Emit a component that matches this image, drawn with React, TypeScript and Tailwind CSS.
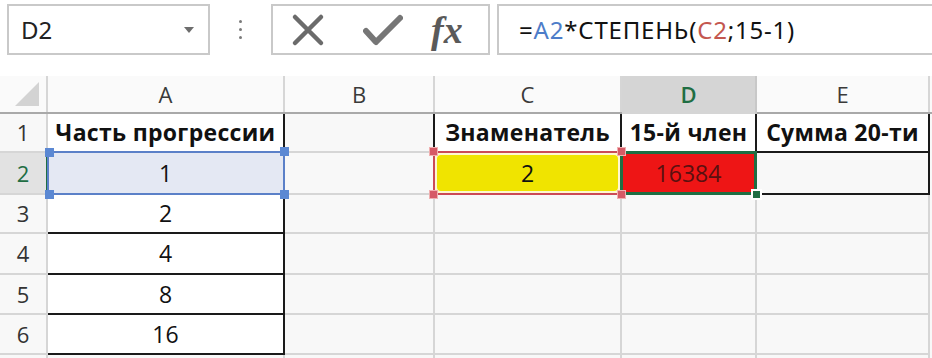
import React from "react";

const F = { fontFamily: '"Open Sans", "Noto Sans", sans-serif' };

type CellProps = {
  w: string;
  className?: string;
  children?: React.ReactNode;
};

function Cell({ w, className = "", children }: CellProps) {
  return (
    <div
      className={`relative box-border flex shrink-0 items-center justify-center border-b-2 border-r-2 ${w} ${className}`}
    >
      {children}
    </div>
  );
}

function Handle({ className }: { className: string }) {
  return <div className={`absolute z-20 h-[9px] w-[9px] ${className}`} />;
}

export default function App() {
  const G = "border-[#d6d6d6]";
  return (
    <div
      className="relative h-[358px] w-[932px] overflow-hidden bg-white text-[#111]"
      style={F}
    >
      {/* Toolbar */}
      <div className="flex h-[76px] items-start pt-[4px]">
        <div className="ml-[7px] flex h-[51px] w-[203px] items-center justify-between border-2 border-[#c9c9c9] bg-white pl-[12px] pr-[14px]">
          <span className="text-[24px] text-[#222]" style={{ fontFamily: '"Noto Sans", sans-serif' }}>
            D2
          </span>
          <svg width="10" height="6" viewBox="0 0 10 6">
            <path d="M0 0 L10 0 L5 6 Z" fill="#6d6d6d" />
          </svg>
        </div>
        <div className="flex h-[51px] w-[61px] flex-col items-center justify-center gap-[5px]">
          <div className="h-[3px] w-[3px] rounded-full bg-[#7a7a7a]" />
          <div className="h-[3px] w-[3px] rounded-full bg-[#7a7a7a]" />
          <div className="h-[3px] w-[3px] rounded-full bg-[#7a7a7a]" />
        </div>
        <div className="flex h-[51px] w-[219px] items-center border-2 border-[#c9c9c9] bg-white">
          <svg className="ml-[18px]" width="34" height="34" viewBox="0 0 34 34">
            <path d="M4 4 L30 30 M30 4 L4 30" stroke="#6b6b6b" strokeWidth="4.5" strokeLinecap="round" />
          </svg>
          <svg className="ml-[38px]" width="40" height="32" viewBox="0 0 40 32">
            <path d="M3 17 L13 28 L37 4" stroke="#767676" strokeWidth="6" strokeLinecap="round" strokeLinejoin="round" fill="none" />
          </svg>
          <span
            className="ml-[28px] text-[38px] font-semibold italic leading-none text-[#5a5a5a]"
            style={{ fontFamily: '"Liberation Serif", "DejaVu Serif", serif' }}
          >
            fx
          </span>
        </div>
        <div className="ml-[7px] flex h-[51px] flex-1 items-center border-y-2 border-l-2 border-[#c9c9c9] bg-white pl-[20px]">
          <span
            className="text-[24px] tracking-[0.8px] text-[#111]"
            style={{ fontFamily: '"Noto Sans", sans-serif' }}
          >
            =<span className="text-[#4d7dc9]">A2</span>*СТЕПЕНЬ(
            <span className="text-[#c4574f]">C2</span>;15-1)
          </span>
        </div>
      </div>

      {/* Column headers */}
      <div className="flex h-[38px] border-b-2 border-[#a9a9a9] bg-[#fafafa] text-[22px] text-[#3a3a3a]">
        <div className={`relative box-border h-full w-[48px] shrink-0 border-r-2 ${G}`}>
          <svg className="absolute bottom-[6px] right-[7px]" width="24" height="24" viewBox="0 0 24 24">
            <path d="M24 0 L24 24 L0 24 Z" fill="#d3d3d3" />
          </svg>
        </div>
        <div className={`box-border flex h-full w-[237px] shrink-0 items-center justify-center border-r-2 ${G}`}>A</div>
        <div className={`box-border flex h-full w-[150px] shrink-0 items-center justify-center border-r-2 ${G}`}>B</div>
        <div className={`box-border flex h-full w-[187px] shrink-0 items-center justify-center border-r-2 ${G}`}>C</div>
        <div className="mb-[-2px] box-border flex h-[40px] w-[135px] shrink-0 items-center justify-center border-b-2 border-r-2 border-[#1f6e43] border-r-[#c8c8c8] bg-[#d5d5d5] pb-[2px] font-semibold text-[#1f6e43]">
          D
        </div>
        <div className={`box-border flex h-full w-[173px] shrink-0 items-center justify-center border-r-2 ${G}`}>E</div>
        <div className="flex-1" />
      </div>

      {/* Body */}
      <div className="text-[23px]">
        {/* Row 1 */}
        <div className="flex h-[39px] bg-[#f8f8f8]">
          <Cell w="w-[48px]" className={`${G} text-[22px] text-[#333]`}>1</Cell>
          <Cell w="w-[237px]" className="border-b-[#1a1a1a] border-r-[#1a1a1a] bg-white font-bold tracking-[0.3px]">
            Часть прогрессии
          </Cell>
          <Cell w="w-[150px]" className={`${G} border-r-[#1a1a1a]`} />
          <Cell w="w-[187px]" className="border-r-[#1a1a1a] border-b-[#d6d6d6] bg-white font-bold tracking-[0.3px]">
            Знаменатель
          </Cell>
          <Cell w="w-[135px]" className="border-r-[#1a1a1a] border-b-[#d6d6d6] bg-white font-bold tracking-[0.3px]">
            15-й член
          </Cell>
          <Cell w="w-[173px]" className="border-r-[#1a1a1a] border-b-[#1a1a1a] bg-white font-bold tracking-[0.3px]">
            Сумма 20-ти
          </Cell>
        </div>

        {/* Row 2 */}
        <div className="flex h-[42px] bg-[#f8f8f8]">
          <Cell w="w-[48px]" className="border-b-[#d6d6d6] border-r-[#1f6e43] bg-[#e2e2e2] text-[22px] text-[#1f6e43]">
            2
          </Cell>
          <Cell w="w-[237px]" className="border-b-[#1a1a1a] border-r-[#1a1a1a] bg-[#e4e8f3]">
            <div className="pointer-events-none absolute -left-[1px] -right-[2px] -top-[2px] -bottom-[2px] border-2 border-[#5b80c8]" />
            <Handle className="-left-[3px] -top-[5px] w-[5px] bg-[#5b88d3]" />
            <Handle className="-left-[3px] -bottom-[6px] w-[5px] bg-[#5b88d3]" />
            <Handle className="-right-[6px] -top-[6px] bg-[#5b88d3]" />
            <Handle className="-right-[6px] -bottom-[6px] bg-[#5b88d3]" />
            <span className="relative">1</span>
          </Cell>
          <Cell w="w-[150px]" className={G} />
          <Cell w="w-[187px]" className="border-b-[#1a1a1a] border-r-[#1a1a1a] bg-white">
            <div className="absolute -left-[2px] -right-[2px] -top-[2px] -bottom-[2px] border-2 border-[#cc4a56] bg-[#fff7d0] p-[2px]">
              <div className="h-full w-full rounded-[4px] bg-[#f0e400]" />
            </div>
            <Handle className="-left-[6px] -top-[6px] border border-[#f0b0b0] bg-[#d65a66]" />
            <Handle className="-left-[6px] -bottom-[6px] border border-[#f0b0b0] bg-[#d65a66]" />
            <Handle className="-right-[6px] -top-[6px] border border-[#f0b0b0] bg-[#d65a66]" />
            <Handle className="-right-[6px] -bottom-[6px] border border-[#f0b0b0] bg-[#d65a66]" />
            <span className="relative z-10">2</span>
          </Cell>
          <Cell w="w-[135px]" className="border-b-[#1a1a1a] border-r-[#1a1a1a] bg-[#ee1515]">
            <div className="absolute -left-[2px] -right-[2px] -top-[2px] -bottom-[2px] border-[3px] border-[#1f6e43]" />
            <div className="absolute -bottom-[7px] -right-[7px] z-20 h-[11px] w-[11px] border-2 border-white bg-[#1f6e43]" />
            <span className="relative text-[#5a1010]">16384</span>
          </Cell>
          <Cell w="w-[173px]" className="border-b-[#1a1a1a] border-r-[#1a1a1a]" />
        </div>

        {/* Rows 3-6 */}
        {[
          ["3", "2", "h-[39px]"],
          ["4", "4", "h-[41px]"],
          ["5", "8", "h-[40px]"],
          ["6", "16", "h-[40px]"],
        ].map(([r, v, h]) => (
          <div key={r} className={`flex ${h} bg-[#f8f8f8]`}>
            <Cell w="w-[48px]" className={`${G} text-[22px] text-[#333]`}>{r}</Cell>
            <Cell w="w-[237px]" className="border-b-[#1a1a1a] border-r-[#1a1a1a] bg-white">
              {v}
            </Cell>
            <Cell w="w-[150px]" className={G} />
            <Cell w="w-[187px]" className={G} />
            <Cell w="w-[135px]" className={G} />
            <Cell w="w-[173px]" className={G} />
          </div>
        ))}
        <div className="flex h-[10px] bg-[#f8f8f8]">
          <div className={`w-[48px] shrink-0 border-r-2 ${G}`} />
          <div className={`w-[237px] shrink-0 border-r-2 ${G}`} />
          <div className={`w-[150px] shrink-0 border-r-2 ${G}`} />
          <div className={`w-[187px] shrink-0 border-r-2 ${G}`} />
          <div className={`w-[135px] shrink-0 border-r-2 ${G}`} />
          <div className={`w-[173px] shrink-0 border-r-2 ${G}`} />
        </div>
      </div>
    </div>
  );
}
